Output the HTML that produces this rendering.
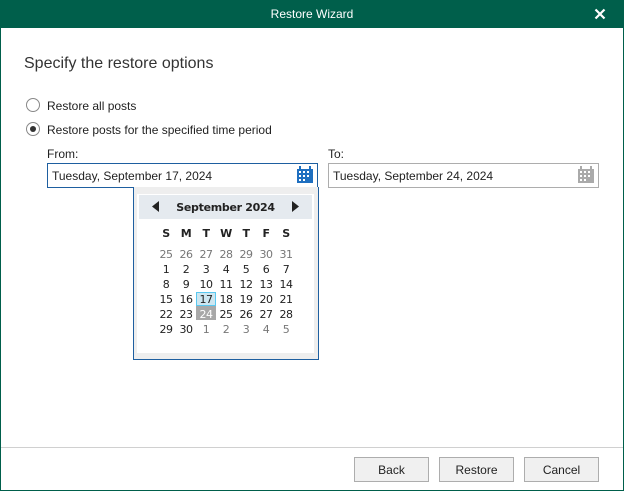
<!DOCTYPE html>
<html><head><meta charset="utf-8"><style>
*{margin:0;padding:0;box-sizing:border-box}
body{width:624px;height:491px;position:relative;background:#fff;font-family:"Liberation Sans",sans-serif;font-size:12px;color:#222;overflow:hidden}
.a{position:absolute}
.title{left:0;top:0;width:624px;height:28px;background:#005f4b;color:#fff;text-align:center;line-height:28px;font-size:12px}
.frame{left:0;top:28px;width:624px;height:463px;border:1px solid #005f4b;border-top:none}
.radio{width:14px;height:14px;border:1px solid #888;border-radius:50%;background:#fff}
.inp{height:25px;border:1px solid #1e5fa0;background:#fff;line-height:24px;padding-left:4px;font-size:12px}
.btn{top:457px;height:25px;border:1px solid #adadad;background:#f0f0f0;text-align:center;line-height:24px;font-size:12px}
.d{position:absolute;width:20px;text-align:center;font-size:11px;font-family:"DejaVu Sans",sans-serif;letter-spacing:-0.5px}
.g{color:#777}
</style></head><body>
<div class="a title">Restore Wizard</div>
<svg class="a" style="left:594px;top:8px" width="12" height="12"><path d="M1.5 1.5L10.5 10.5M10.5 1.5L1.5 10.5" stroke="#fff" stroke-width="2.2"/></svg>
<div class="a frame"></div>
<div class="a" style="left:24px;top:55px;font-size:16px;color:#333">Specify the restore options</div>
<div class="a radio" style="left:26px;top:98px"></div>
<div class="a" style="left:47px;top:99px">Restore all posts</div>
<div class="a radio" style="left:26px;top:122px"><div class="a" style="left:3px;top:3px;width:6px;height:6px;border-radius:50%;background:#333"></div></div>
<div class="a" style="left:47px;top:123px">Restore posts for the specified time period</div>
<div class="a" style="left:47px;top:147px">From:</div>
<div class="a" style="left:328px;top:147px">To:</div>
<div class="a inp" style="left:47px;top:163px;width:271px">Tuesday, September 17, 2024</div>
<div class="a inp" style="left:328px;top:163px;width:271px;border-color:#adadad">Tuesday, September 24, 2024</div>
<svg class="a" style="left:297px;top:166px" width="17" height="18"><rect x="2" y="0" width="2" height="4" fill="#1e6fc0"/><rect x="12" y="0" width="2" height="4" fill="#1e6fc0"/><rect x="0" y="3" width="16" height="14" fill="#1e6fc0"/><g fill="#fff"><rect x="2" y="5" width="2" height="2"/><rect x="6" y="5" width="2" height="2"/><rect x="10" y="5" width="2" height="2"/><rect x="2" y="9" width="2" height="2"/><rect x="6" y="9" width="2" height="2"/><rect x="10" y="9" width="2" height="2"/><rect x="2" y="13" width="2" height="2"/><rect x="6" y="13" width="2" height="2"/></g></svg>
<svg class="a" style="left:578px;top:166px" width="17" height="18"><rect x="2" y="0" width="2" height="4" fill="#aaa"/><rect x="12" y="0" width="2" height="4" fill="#aaa"/><rect x="0" y="3" width="16" height="14" fill="#aaa"/><g fill="#fff"><rect x="2" y="5" width="2" height="2"/><rect x="6" y="5" width="2" height="2"/><rect x="10" y="5" width="2" height="2"/><rect x="2" y="9" width="2" height="2"/><rect x="6" y="9" width="2" height="2"/><rect x="10" y="9" width="2" height="2"/><rect x="2" y="13" width="2" height="2"/><rect x="6" y="13" width="2" height="2"/></g></svg>
<div class="a" style="left:133px;top:187px;width:186px;height:173px;border:1px solid #1e5fa0;border-top:none;background:#eee"></div>
<div class="a" style="left:137px;top:194px;width:177px;height:159px;background:#fff"></div>
<div class="a" style="left:139px;top:195px;width:173px;height:24px;background:#e5eaef"></div>
<svg class="a" style="left:152px;top:201px" width="8" height="11"><path d="M7 0V11L0 5.5Z" fill="#222"/></svg>
<svg class="a" style="left:292px;top:201px" width="8" height="11"><path d="M0 0V11L7 5.5Z" fill="#222"/></svg>
<div class="a" style="left:139px;top:201px;width:173px;text-align:center;font-weight:bold;font-size:11px;font-family:'DejaVu Sans',sans-serif;letter-spacing:-0.3px">September 2024</div>
<div class="a" style="left:196px;top:292px;width:20px;height:14px;background:#cde6f0;border:1px solid #5ac8f0"></div>
<div class="a" style="left:196px;top:306px;width:20px;height:14px;background:#a8a8a8"></div>
<div id="cal"></div>
<script>
var c=document.getElementById('cal'),h='',xs=[156,176,196,216,236,256,276];
['S','M','T','W','T','F','S'].forEach(function(t,i){h+='<div class="d" style="left:'+xs[i]+'px;top:227px;font-weight:bold">'+t+'</div>'});
var rows=[[25,26,27,28,29,30,31],[1,2,3,4,5,6,7],[8,9,10,11,12,13,14],[15,16,17,18,19,20,21],[22,23,24,25,26,27,28],[29,30,1,2,3,4,5]];
rows.forEach(function(r,ri){r.forEach(function(n,i){var g=(ri==0)||(ri==5&&i>1);var col=(ri==4&&i==2)?'color:#fff;':'';h+='<div class="d'+(g?' g':'')+'" style="'+col+'left:'+xs[i]+'px;top:'+(248+ri*15)+'px">'+n+'</div>'})});
c.innerHTML=h;
</script>
<div class="a" style="left:1px;top:447px;width:622px;height:1px;background:#d0d0d0"></div>
<div class="a btn" style="left:354px;width:75px">Back</div>
<div class="a btn" style="left:439px;width:75px">Restore</div>
<div class="a btn" style="left:524px;width:75px">Cancel</div>
</body></html>
